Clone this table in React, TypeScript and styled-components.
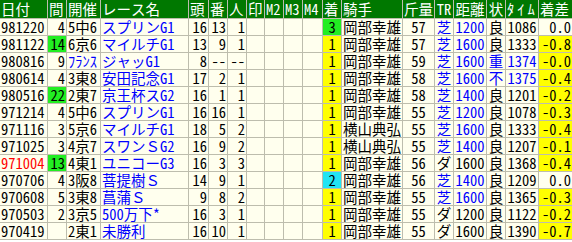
import React from "react";
import styled, { createGlobalStyle } from "styled-components";

const GlobalStyle = createGlobalStyle`
  html, body { margin: 0; padding: 0; background: #ffffff; overflow: hidden; }
`;

type Align = "left" | "right" | "center";

const LINE = "#bdbdad";
const CREAM = "#ffffee";
const BLUE = "#0000ff";
const GREEN_HL = "#22ee22";
const YELLOW_HL = "#ffff00";
const CYAN_HL = "#22e4f4";

const Table = styled.table`
  border-collapse: separate;
  border-spacing: 1px;
  background: ${LINE};
  margin: -1px 0 0 -1px;
  table-layout: fixed;
  width: 574px;
  font-family: "Noto Sans Mono CJK JP", "Noto Sans CJK JP", monospace;
  font-size: 14.5px;
`;

const HeadRow = styled.tr`
  background: #007800;
`;

const HeadCell = styled.th<{ $align: Align; $spread?: boolean }>`
  height: 18px;
  padding: 0 1px;
  color: #ffffff;
  font-weight: normal;
  text-align: ${(p) => p.$align};
  line-height: 18px;
  white-space: nowrap;
  overflow: hidden;
  letter-spacing: ${(p) => (p.$spread ? "3px" : "0")};
`;

const Cell = styled.td<{ $align: Align; $bg?: string; $color?: string }>`
  height: 16px;
  padding: 0 1px;
  background: ${(p) => p.$bg ?? CREAM};
  color: ${(p) => p.$color ?? "#000000"};
  text-align: ${(p) => p.$align};
  line-height: 16px;
  white-space: nowrap;
  overflow: hidden;
`;

type Col = { w: number; head: string; align: Align; headAlign: Align; spread?: boolean };

const cols: Col[] = [
  { w: 47, head: "日付", align: "left", headAlign: "left" },
  { w: 18, head: "間", align: "right", headAlign: "left" },
  { w: 33, head: "開催", align: "left", headAlign: "left" },
  { w: 87, head: "レース名", align: "left", headAlign: "left" },
  { w: 19, head: "頭", align: "right", headAlign: "left" },
  { w: 18, head: "番", align: "right", headAlign: "left" },
  { w: 18, head: "人", align: "right", headAlign: "left" },
  { w: 17, head: "印", align: "center", headAlign: "left" },
  { w: 18, head: "M2", align: "center", headAlign: "left" },
  { w: 18, head: "M3", align: "center", headAlign: "left" },
  { w: 19, head: "M4", align: "center", headAlign: "left" },
  { w: 18, head: "着", align: "center", headAlign: "left" },
  { w: 60, head: "騎手", align: "left", headAlign: "left" },
  { w: 31, head: "斤量", align: "center", headAlign: "center" },
  { w: 18, head: "TR", align: "center", headAlign: "center" },
  { w: 32, head: "距離", align: "center", headAlign: "center" },
  { w: 18, head: "状", align: "center", headAlign: "center" },
  { w: 32, head: "ﾀｲﾑ", align: "center", headAlign: "center", spread: true },
  { w: 33, head: "着差", align: "right", headAlign: "left" },
];

type Race = {
  date: string;
  red?: boolean;
  gap: string;
  gapHl?: boolean;
  place: string;
  name: string;
  heads: string;
  num: string;
  pop: string;
  rank: string;
  jockey: string;
  weight: string;
  track: "芝" | "ダ";
  dist: string;
  going: string;
  time: string;
  diff: string;
};

const races: Race[] = [
  { date: "981220", gap: "4", place: "5中6", name: "スプリンG1", heads: "16", num: "13", pop: "1", rank: "3", jockey: "岡部幸雄", weight: "57", track: "芝", dist: "1200", going: "良", time: "1086", diff: "0.0" },
  { date: "981122", gap: "14", gapHl: true, place: "6京6", name: "マイルチG1", heads: "13", num: "9", pop: "1", rank: "1", jockey: "岡部幸雄", weight: "57", track: "芝", dist: "1600", going: "良", time: "1333", diff: "-0.8" },
  { date: "980816", gap: "9", place: "ﾌﾗﾝｽ", name: "ジャッG1", heads: "8", num: "--", pop: "--", rank: "1", jockey: "岡部幸雄", weight: "59", track: "芝", dist: "1600", going: "重", time: "1374", diff: "-0.0" },
  { date: "980614", gap: "4", place: "3東8", name: "安田記念G1", heads: "17", num: "2", pop: "1", rank: "1", jockey: "岡部幸雄", weight: "58", track: "芝", dist: "1600", going: "不", time: "1375", diff: "-0.4" },
  { date: "980516", gap: "22", gapHl: true, place: "2東7", name: "京王杯スG2", heads: "16", num: "1", pop: "1", rank: "1", jockey: "岡部幸雄", weight: "58", track: "芝", dist: "1400", going: "良", time: "1201", diff: "-0.2" },
  { date: "971214", gap: "4", place: "5中6", name: "スプリンG1", heads: "16", num: "16", pop: "1", rank: "1", jockey: "岡部幸雄", weight: "55", track: "芝", dist: "1200", going: "良", time: "1078", diff: "-0.3" },
  { date: "971116", gap: "3", place: "5京6", name: "マイルチG1", heads: "18", num: "5", pop: "2", rank: "1", jockey: "横山典弘", weight: "55", track: "芝", dist: "1600", going: "良", time: "1333", diff: "-0.4" },
  { date: "971025", gap: "3", place: "4京7", name: "スワンＳG2", heads: "16", num: "9", pop: "2", rank: "1", jockey: "横山典弘", weight: "55", track: "芝", dist: "1400", going: "良", time: "1207", diff: "-0.1" },
  { date: "971004", red: true, gap: "13", gapHl: true, place: "4東1", name: "ユニコーG3", heads: "16", num: "3", pop: "3", rank: "1", jockey: "岡部幸雄", weight: "56", track: "ダ", dist: "1600", going: "良", time: "1368", diff: "-0.4" },
  { date: "970706", gap: "4", place: "3阪8", name: "菩提樹Ｓ", heads: "14", num: "9", pop: "1", rank: "2", jockey: "岡部幸雄", weight: "56", track: "芝", dist: "1400", going: "良", time: "1209", diff: "0.0" },
  { date: "970608", gap: "5", place: "3東8", name: "菖蒲Ｓ", heads: "9", num: "8", pop: "2", rank: "1", jockey: "岡部幸雄", weight: "55", track: "芝", dist: "1600", going: "良", time: "1365", diff: "-0.3" },
  { date: "970503", gap: "2", place: "3京5", name: "500万下*", heads: "16", num: "3", pop: "1", rank: "1", jockey: "岡部幸雄", weight: "55", track: "ダ", dist: "1200", going: "良", time: "1122", diff: "-0.2" },
  { date: "970419", gap: "", place: "2東1", name: "未勝利", heads: "16", num: "10", pop: "1", rank: "1", jockey: "岡部幸雄", weight: "55", track: "ダ", dist: "1600", going: "良", time: "1390", diff: "-0.7" },
];

const rankBg = (r: string) => (r === "1" ? YELLOW_HL : r === "2" ? CYAN_HL : r === "3" ? GREEN_HL : undefined);

function RaceRow({ r }: { r: Race }) {
  const turf = r.track === "芝";
  const wet = r.going !== "良";
  const a = (i: number) => cols[i].align;
  return (
    <tr>
      <Cell $align={a(0)} $color={r.red ? "#ff0000" : undefined}>{r.date}</Cell>
      <Cell $align={a(1)} $bg={r.gapHl ? GREEN_HL : undefined}>{r.gap}</Cell>
      <Cell $align={a(2)} $color={r.place === "ﾌﾗﾝｽ" ? BLUE : undefined}>{r.place}</Cell>
      <Cell $align={a(3)} $color={BLUE}>{r.name}</Cell>
      <Cell $align={a(4)}>{r.heads}</Cell>
      <Cell $align={a(5)}>{r.num}</Cell>
      <Cell $align={a(6)}>{r.pop}</Cell>
      <Cell $align={a(7)} />
      <Cell $align={a(8)} />
      <Cell $align={a(9)} />
      <Cell $align={a(10)} />
      <Cell $align={a(11)} $bg={rankBg(r.rank)}>{r.rank}</Cell>
      <Cell $align={a(12)}>{r.jockey}</Cell>
      <Cell $align={a(13)}>{r.weight}</Cell>
      <Cell $align={a(14)} $color={turf ? BLUE : undefined}>{r.track}</Cell>
      <Cell $align={a(15)} $color={turf ? BLUE : undefined}>{r.dist}</Cell>
      <Cell $align={a(16)} $color={wet ? BLUE : undefined}>{r.going}</Cell>
      <Cell $align={a(17)} $color={wet ? BLUE : undefined}>{r.time}</Cell>
      <Cell $align={a(18)} $bg={r.diff.startsWith("-") ? YELLOW_HL : undefined}>{r.diff}</Cell>
    </tr>
  );
}

export default function App() {
  return (
    <>
      <GlobalStyle />
      <Table>
        <colgroup>
          {cols.map((c, i) => (
            <col key={i} style={{ width: c.w }} />
          ))}
        </colgroup>
        <thead>
          <HeadRow>
            {cols.map((c, i) => (
              <HeadCell key={i} $align={c.headAlign} $spread={c.spread}>
                {c.head}
              </HeadCell>
            ))}
          </HeadRow>
        </thead>
        <tbody>
          {races.map((r) => (
            <RaceRow key={r.date} r={r} />
          ))}
        </tbody>
      </Table>
    </>
  );
}
